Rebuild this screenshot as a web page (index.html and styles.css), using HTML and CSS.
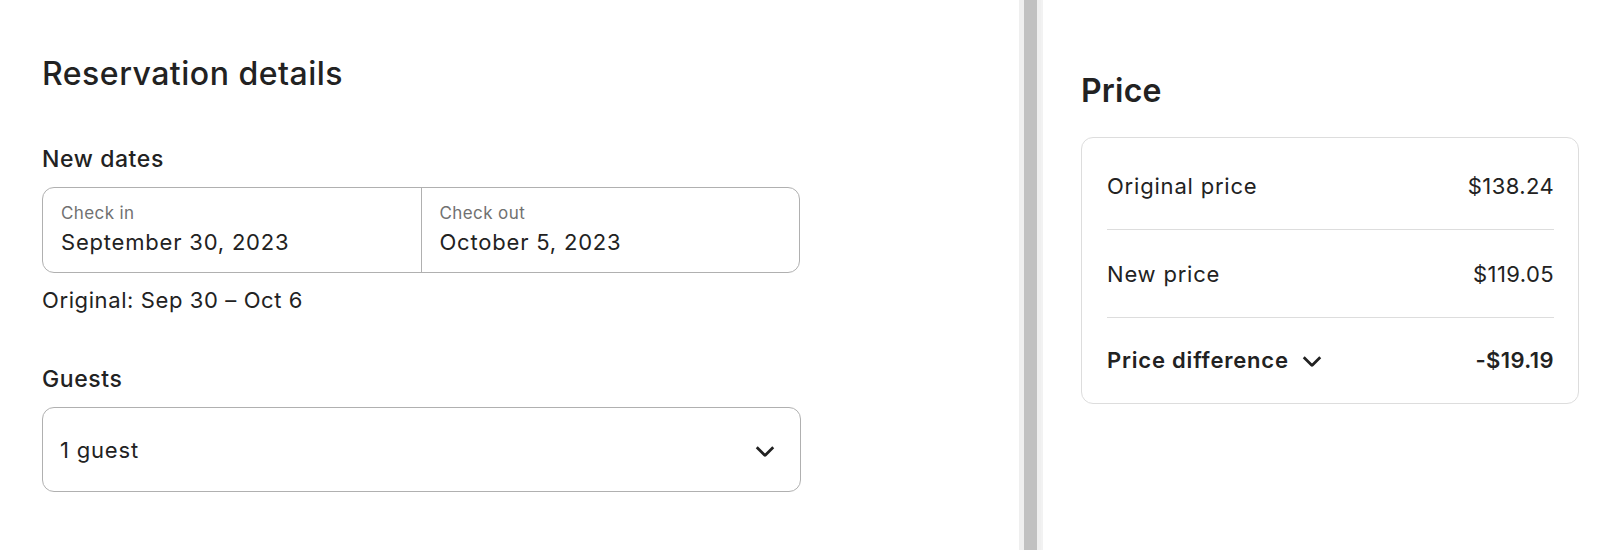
FILE: index.html
```html
<!DOCTYPE html>
<html lang="en">
<head>
<meta charset="utf-8">
<title>Reservation details</title>
<link rel="stylesheet" href="styles.css">
</head>
<body>
<div class="page">
  <section class="left">
    <h1 class="title">Reservation details</h1>
    <h2 class="label">New dates</h2>
    <div class="dates">
      <div class="date-cell">
        <div class="date-label">Check in</div>
        <div class="date-value">September 30, 2023</div>
      </div>
      <div class="date-cell date-cell-right">
        <div class="date-label">Check out</div>
        <div class="date-value">October 5, 2023</div>
      </div>
    </div>
    <div class="original">Original: Sep 30 – Oct 6</div>
    <h2 class="label label-guests">Guests</h2>
    <div class="select">
      <span class="select-value">1 guest</span>
      <svg class="chev" viewBox="0 0 32 32" aria-hidden="true"><path d="M28 12 16.7 23.3a1 1 0 0 1-1.4 0L4 12"/></svg>
    </div>
  </section>
  <div class="scrollbar"><div class="thumb"></div></div>
  <section class="right">
    <h1 class="title title-price">Price</h1>
    <div class="card">
      <div class="row">
        <span>Original price</span>
        <span class="amount">$138.24</span>
      </div>
      <div class="row">
        <span>New price</span>
        <span class="amount">$119.05</span>
      </div>
      <div class="row row-total">
        <span class="diff">Price difference
          <svg class="chev chev-small" viewBox="0 0 32 32" aria-hidden="true"><path d="M28 12 16.7 23.3a1 1 0 0 1-1.4 0L4 12"/></svg>
        </span>
        <span class="amount">-$19.19</span>
      </div>
    </div>
  </section>
</div>
</body>
</html>
```

FILE: styles.css
```css
* { box-sizing: border-box; }
html, body {
  margin: 0;
  padding: 0;
  background: #ffffff;
}
body {
  font-family: Inter, "Noto Sans", "Liberation Sans", sans-serif;
  color: #222222;
  width: 1600px;
  height: 550px;
  overflow: hidden;
}
.page {
  display: flex;
  height: 550px;
}
.left {
  width: 1019px;
  padding: 54px 0 0 42px;
}
.title {
  margin: 0;
  font-size: 32px;
  line-height: 40px;
  font-weight: 500;
  letter-spacing: 0.5px;
}
.label {
  margin: 51px 0 14px;
  font-size: 23px;
  line-height: 28px;
  font-weight: 500;
  letter-spacing: 0.6px;
}
.label-guests {
  margin-top: 53px;
}
.dates {
  width: 758px;
  height: 86px;
  border: 1px solid #b0b0b0;
  border-radius: 12px;
  display: flex;
}
.date-cell {
  flex: 1;
  padding: 15px 18px 18px;
}
.date-cell-right {
  border-left: 1px solid #b0b0b0;
}
.date-label {
  font-size: 17px;
  line-height: 20px;
  color: #717171;
  letter-spacing: 0.4px;
}
.date-value {
  margin-top: 7px;
  font-size: 22px;
  line-height: 24px;
  letter-spacing: 0.8px;
}
.original {
  margin-top: 15px;
  font-size: 22px;
  line-height: 24px;
  letter-spacing: 0.6px;
}
.select {
  width: 759px;
  height: 85px;
  border: 1px solid #b0b0b0;
  border-radius: 12px;
  display: flex;
  align-items: center;
  justify-content: space-between;
  padding: 0 24px 0 17px;
}
.select-value {
  font-size: 22px;
  line-height: 24px;
  letter-spacing: 0.8px;
}
.chev {
  width: 22px;
  height: 22px;
  fill: none;
  stroke: #222222;
  stroke-width: 4;
  overflow: visible;
  display: block;
}
.scrollbar {
  width: 24px;
  height: 550px;
  background: #efefef;
  border-right: 2px solid #f2f2f2;
  padding: 0 4px 0 5px;
}
.thumb {
  width: 13px;
  height: 100%;
  background: #c1c1c1;
}
.right {
  flex: 1;
  padding: 71px 21px 0 38px;
}
.title-price {
  font-weight: 600;
  letter-spacing: 0.2px;
}
.card {
  margin-top: 26px;
  border: 1px solid #dddddd;
  border-radius: 12px;
  padding: 4px 24px 0 25px;
  height: 267px;
}
.row {
  display: flex;
  justify-content: space-between;
  align-items: center;
  padding: 32px 0 31px;
  font-size: 22px;
  line-height: 24px;
  letter-spacing: 0.8px;
  border-bottom: 1px solid #dddddd;
}
.amount {
  letter-spacing: 0.4px;
}
.row-total {
  border-bottom: none;
  padding-top: 30px;
  padding-bottom: 29px;
  font-weight: 600;
}
.diff {
  display: flex;
  align-items: center;
  gap: 12px;
}
```
